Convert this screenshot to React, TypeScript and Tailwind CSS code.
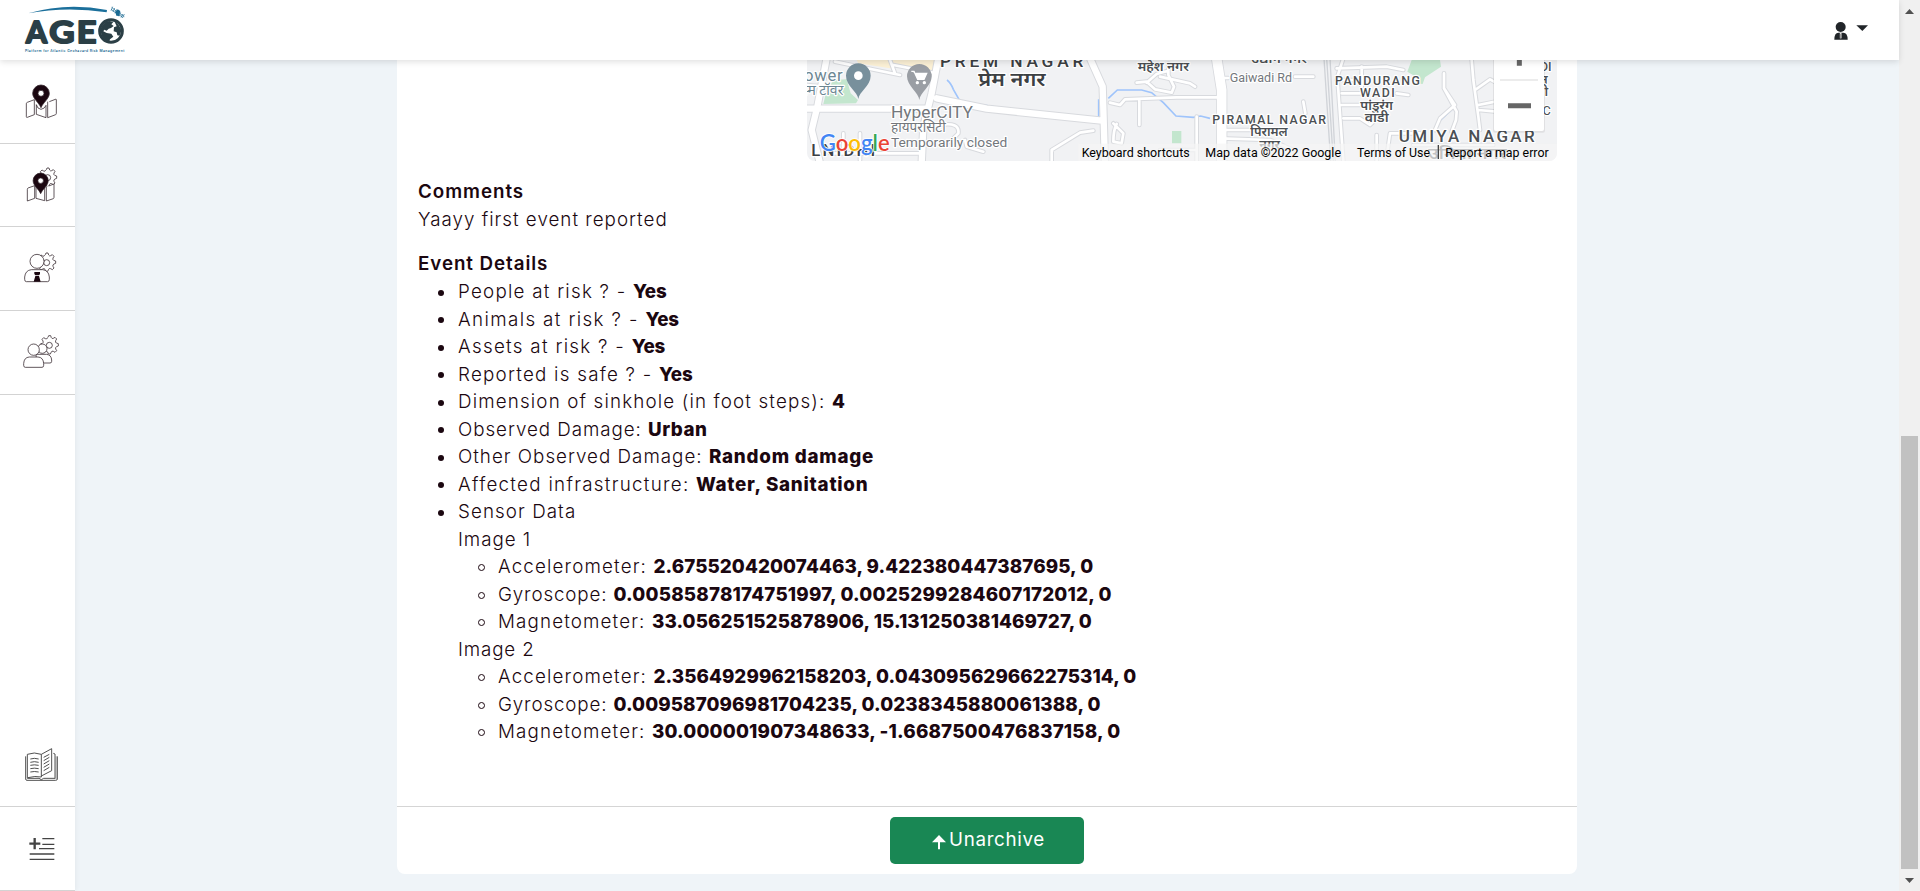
import type { ReactNode } from "react";

const GEAR =
  "M-4 -24 L-2 -29 L4 -29 L6 -23 Q8 -19 12 -21 L17 -24 L22 -19 L19 -14 Q17 -9 21 -7 L27 -5 L27 2 L22 4 Q17 6 19 11 L22 16 L17 21 L12 18 Q7 16 6 20 L3 26 L-3 26";

const GEAR_FULL = GEAR + " L-5 20 Q-7 16 -12 19 L-16 22 L-21 17 L-18 12 Q-16 7 -21 5 L-27 3 L-27 -4 L-21 -6 Q-17 -8 -19 -13 L-22 -18 L-17 -23 L-12 -20 Q-7 -18 -6 -22 Z";

function Logo() {
  return (
    <svg className="h-[60px] w-[130px]" viewBox="0 0 390 180">
      <path d="M84 40 Q200 6 321 30 L320 37 Q200 18 84 40Z" fill="#1b6f9b" />
      <g fill="#1b6a92">
        <path d="M346 36 l7 -8 l8 5 l-4 15 l-8 -1z" />
        <path d="M335 22l17 14M333 28l15 11M338 20l-5 12M344 24l-5 12M350 28l-5 12M356 38l17 12M357 44l12 9M362 37l-5 12M368 42l-5 11M373 42l-5 11" stroke="#1b6a92" strokeWidth="2" />
      </g>
      <g fill="#2b3f46" stroke="#2b3f46" strokeWidth="6" strokeLinejoin="round" fontFamily="Lato" fontWeight="700" fontSize="94">
        <text x="78" y="128" textLength="63" lengthAdjust="spacingAndGlyphs">A</text>
        <text x="148" y="128" textLength="76" lengthAdjust="spacingAndGlyphs">G</text>
        <text x="230" y="128" textLength="59" lengthAdjust="spacingAndGlyphs">E</text>
      </g>
      <circle cx="333" cy="93" r="34" fill="#fff" stroke="#2b3f46" strokeWidth="9" />
      <path d="M303 84 Q310 66 328 63 L340 66 L334 73 L341 78 L333 84 L326 86 L320 92 L313 89 L310 94 L320 99 L334 101 L340 110 L330 118 L327 126 Q306 118 303 98Z M343 64 Q360 74 364 92 L359 107 L352 106 L350 97 L341 94 L342 82 L350 79Z" fill="#2b3f46" />
      <text x="75" y="157" fontFamily="Inter" fontWeight="600" fontSize="10" fill="#1b6a92" textLength="298" lengthAdjust="spacing">Platform for Atlantic Geohazard Risk Management</text>
    </svg>
  );
}

function Pin({ x, y }: { x: number; y: number }) {
  return (
    <g transform={`translate(${x} ${y})`}>
      <path d="M0 43 C-6 28 -25 16 -25 0 A25 25 0 0 1 25 0 C25 16 6 28 0 43Z" fill="#1b0710" />
      <circle r="9" fill="#fff" />
    </g>
  );
}

function MapIcon() {
  return (
    <svg className="h-[83px] w-[75px]" viewBox="0 180 225 249" fill="none" stroke="#33262c" strokeWidth="2.3">
      <path d="M103 299L82 307Q79 308 79 311V350Q79 353 82 352L103 344ZM109 314V343L138 353V316M109 314Q112 327 123 328Q135 326 138 316M143 305V353L167 344Q169 343 169 340V300Q169 296 166 298L148 305" />
      <Pin x={123} y={280} />
    </svg>
  );
}

function MapGearIcon() {
  return (
    <svg className="h-[83px] w-[75px]" viewBox="0 44 225 249" fill="none" stroke="#33262c" strokeWidth="2.3">
      <g transform="translate(143 145)">
        <path d={GEAR_FULL} />
        <circle r="9" />
      </g>
      <path fill="#fff" d="M104 169L84 176Q82 177 82 180V215L104 207ZM108 169V207L134 214V172ZM139 172V215L160 208Q162 207 162 204V164L146 170" />
      <g transform="translate(122 154) scale(.91)">
        <Pin x={0} y={0} />
      </g>
    </svg>
  );
}

function UserGearIcon() {
  return (
    <svg className="h-[83px] w-[75px]" viewBox="0 294 225 249" fill="none" stroke="#33262c" strokeWidth="2.3">
      <g transform="translate(140 401)">
        <path d={GEAR_FULL} />
        <circle r="9" />
      </g>
      <circle cx="111" cy="397" r="21" fill="#fff" />
      <path fill="#fff" d="M79 458Q74 458 74 451V444Q76 424 94 422H128Q146 424 148 444V451Q148 458 143 458Z" />
      <path d="M103 429H120V435L117 439H106L103 435ZM106 441H117L122 458H101Z" fill="#1b0710" stroke="none" />
    </svg>
  );
}

function UsersGearIcon() {
  return (
    <svg className="h-[83px] w-[75px]" viewBox="0 544 225 249" fill="none" stroke="#33262c" strokeWidth="2.3">
      <g transform="translate(148 647)">
        <path d={GEAR_FULL} />
        <circle r="9" />
      </g>
      <circle cx="127" cy="657" r="14" fill="#fff" />
      <path fill="#fff" d="M108 674H140Q154 676 155 691V695Q155 700 150 700H110Z" />
      <circle cx="101" cy="660" r="17" fill="#fff" />
      <path fill="#fff" d="M76 713Q71 713 71 707V702Q72 683 88 682H114Q130 683 131 702V707Q131 713 126 713Z" />
    </svg>
  );
}

function BookIcon() {
  return (
    <svg className="h-[83px] w-[75px]" viewBox="0 8 225 249" fill="none" stroke="#444" strokeWidth="2.8">
      <path d="M77 108V176Q77 180 81 180H167Q172 180 172 176V108M82 102V174H117L124 178L131 174H165V101L160 99M82 102Q103 94 124 102V170Q105 166 84 172M124 102L155 85V151L124 167" />
      <path d="M91 116Q103 112 116 116M91 126Q103 122 116 126M91 135Q103 132 116 135M91 145Q103 142 116 145M91 155Q103 152 116 155M131 111L148 102M131 121L148 111M131 131L148 121M131 141L148 131M131 151L148 141" />
      <path d="M168 108V176" stroke="#888" />
    </svg>
  );
}

function AddListIcon() {
  return (
    <svg className="h-[83px] w-[75px]" viewBox="0 260 225 249" stroke="#444" strokeWidth="4">
      <path d="M127 355H163M127 372H163M117 385H163M89 401H163M89 417H163" />
      <path d="M88 370H121M104 353V387" strokeWidth="7" />
    </svg>
  );
}

function NavItem({ children, last }: { children: ReactNode; last?: boolean }) {
  return <a className={last ? "block h-[84px] border-b border-[#d3d3d3]" : "block h-[83.7px] border-b border-[#d3d3d3]"}>{children}</a>;
}

function StreetMap() {
  return (
    <svg className="h-[101px] w-[750px] rounded-b-lg" viewBox="81 30 2250 303">
      <rect x="81" y="30" width="2250" height="303" fill="#f1f2f4" />
      <path d="M160 90 L200 88 L212 130 L234 150 L228 160 L130 162 L140 120Z" fill="#c3e6ce" />
      <path d="M230 30H470L455 62L380 48L330 55L235 40Z" fill="#fcf1d6" />
      <path d="M1176 243h28v37h-28z" fill="#c3e6ce" />
      <path d="M1895 30H1980L1983 50L1935 82L1928 102L1905 100L1908 80L1882 65Z" fill="#c3e6ce" />
      <g fill="none" stroke="#9fc4fb" strokeWidth="5">
        <path d="M501 90Q512 98 520 118L537 148M560 158L640 170M956 148V200L944 204M985 145L1012 120H1085L1115 128L1150 158L1188 198L1240 202L1262 198L1290 205M1982 210L2016 178" />
      </g>
      <g fill="none" strokeLinejoin="round" strokeLinecap="round">
        <g stroke="#d8dade">
          <path d="M140 25L112 170L95 240L120 340M81 176H445M475 25L455 130L430 230L425 340M470 145L620 176L965 212M930 25L968 110L975 340" strokeWidth="25" />
          <path d="M165 35L360 75M330 30L345 70M340 45L470 70M81 105L130 110M190 250V310M240 250V330M150 310H425M480 225Q540 215 535 250L510 275M555 270L560 290L610 305M815 333V300L900 248L940 242M990 158L1020 165L1035 148L1190 142H1320M1078 150V225M1070 98L1100 95L1125 118L1175 128L1182 110L1165 75V40M1000 220L1030 250L1025 280L1000 275Q1000 240 1010 222M1100 98L1130 72L1165 62" strokeWidth="14" />
          <path d="M1310 25L1325 120V340" strokeWidth="34" />
          <path d="M1320 84H1345M1545 80H1600M1570 155L1576 190M1320 240H1430M1320 265L1470 270L1540 300M1690 25L1672 80L1690 333M1670 90H1745M1685 130H1745M1685 165H1745M1690 205H1740L1770 225L1785 210M1745 50V110M1670 55L1820 50L1870 60M1850 130L1885 135M1790 333V255M1820 320L1830 250H1920M1992 70V115L2030 185L2028 210L2015 245M1992 115L2025 165L1980 205L1965 240M2075 30L2080 90L2095 200L2100 240M2085 120L2130 88L2160 105M2095 165L2145 155M2095 180L2150 185M1900 285H2140M1250 200V333M1140 300H1250M1140 80L1230 100L1245 110" strokeWidth="14" />
        </g>
        <g stroke="#fff">
          <path d="M140 25L112 170L95 240L120 340M81 176H445M475 25L455 130L430 230L425 340M470 145L620 176L965 212M930 25L968 110L975 340" strokeWidth="19" />
          <path d="M165 35L360 75M330 30L345 70M340 45L470 70M81 105L130 110M190 250V310M240 250V330M150 310H425M480 225Q540 215 535 250L510 275M555 270L560 290L610 305M815 333V300L900 248L940 242M990 158L1020 165L1035 148L1190 142H1320M1078 150V225M1070 98L1100 95L1125 118L1175 128L1182 110L1165 75V40M1000 220L1030 250L1025 280L1000 275Q1000 240 1010 222M1100 98L1130 72L1165 62" strokeWidth="8" />
          <path d="M1310 25L1325 120V340" strokeWidth="29" />
          <path d="M1320 84H1345M1545 80H1600M1570 155L1576 190M1320 240H1430M1320 265L1470 270L1540 300M1690 25L1672 80L1690 333M1670 90H1745M1685 130H1745M1685 165H1745M1690 205H1740L1770 225L1785 210M1745 50V110M1670 55L1820 50L1870 60M1850 130L1885 135M1790 333V255M1820 320L1830 250H1920M1992 70V115L2030 185L2028 210L2015 245M1992 115L2025 165L1980 205L1965 240M2075 30L2080 90L2095 200L2100 240M2085 120L2130 88L2160 105M2095 165L2145 155M2095 180L2150 185M1900 285H2140M1250 200V333M1140 300H1250M1140 80L1230 100L1245 110" strokeWidth="8" />
        </g>
        <path d="M1632 25L1652 333M1640 25L1660 333M1650 25L1666 333" stroke="#d0d3d8" strokeWidth="4" />
      </g>
      <g fontFamily="Roboto, 'Noto Sans', sans-serif" stroke="#fff" strokeWidth="7" strokeLinejoin="round" className="[paint-order:stroke]">
        <g fill="#6d8793">
          <text x="72" y="93" fontSize="50" textLength="116">ower</text>
          <text x="66" y="135" fontSize="42" textLength="124" lengthAdjust="spacingAndGlyphs">स्म टॉवर</text>
        </g>
        <g fill="#73777c">
          <text x="333" y="204" fontSize="51" textLength="246" lengthAdjust="spacingAndGlyphs">HyperCITY</text>
          <text x="333" y="247" fontSize="43" textLength="164" lengthAdjust="spacingAndGlyphs">हायपरसिटी</text>
          <text x="333" y="290" fontSize="41" textLength="349" lengthAdjust="spacingAndGlyphs">Temporarily closed</text>
          <text x="1349" y="96" fontSize="36" textLength="187" lengthAdjust="spacingAndGlyphs">Gaiwadi Rd</text>
        </g>
        <g fill="#3c4043" fontWeight="500">
          <text x="480" y="50" fontSize="52" textLength="430">PREM NAGAR</text>
          <text x="595" y="108" fontSize="58" fontFamily="Noto Sans" fontWeight="600" textLength="202" lengthAdjust="spacingAndGlyphs">प्रेम नगर</text>
          <text x="94" y="318" fontSize="50" textLength="192">LNIDHI</text>
        </g>
        <g fill="#4b4f53" fontWeight="500" fontSize="37">
          <text x="1073" y="62" fontFamily="Noto Sans" fontWeight="600" fontSize="40" textLength="154" lengthAdjust="spacingAndGlyphs">महेश नगर</text>
          <text x="1413" y="40" fontFamily="Noto Sans" fontWeight="600" fontSize="40" textLength="168" lengthAdjust="spacingAndGlyphs">उद्योग नगर</text>
          <text x="1297" y="222" textLength="341">PIRAMAL NAGAR</text>
          <text x="1411" y="259" fontFamily="Noto Sans" fontWeight="600" fontSize="39" textLength="112" lengthAdjust="spacingAndGlyphs">पिरामल</text>
          <text x="1438" y="297" fontFamily="Noto Sans" fontWeight="600" fontSize="39" textLength="62" lengthAdjust="spacingAndGlyphs">नगर</text>
          <text x="1665" y="105" textLength="255">PANDURANG</text>
          <text x="1740" y="141" textLength="104">WADI</text>
          <text x="1741" y="179" fontFamily="Noto Sans" fontWeight="600" fontSize="39" textLength="98" lengthAdjust="spacingAndGlyphs">पांडुरंग</text>
          <text x="1754" y="216" fontFamily="Noto Sans" fontWeight="600" fontSize="39" textLength="72" lengthAdjust="spacingAndGlyphs">वाडी</text>
          <text x="2280" y="64">DI</text>
          <text x="2280" y="102" fontFamily="Noto Sans" fontWeight="600" fontSize="39">न</text>
          <text x="2270" y="139" fontFamily="Noto Sans" fontWeight="600" fontSize="39">ी</text>
          <text x="2288" y="194" fontWeight="400">C</text>
          <text x="1856" y="277" fontSize="51" textLength="408">UMIYA NAGAR</text>
          <text x="1945" y="327" fontFamily="Noto Sans" fontWeight="600" fontSize="50" textLength="235" lengthAdjust="spacingAndGlyphs">उमिया नगर</text>
        </g>
      </g>
      <path d="M235 147C233 125 198 108 198 77A37 37 0 0 1 272 77C272 108 237 125 235 147Z" fill="#78909c" />
      <circle cx="235" cy="77" r="13" fill="#fff" />
      <path d="M418 150C416 128 381 108 381 79A37 37 0 0 1 455 79C455 108 420 128 418 150Z" fill="#9a9ea4" />
      <path d="M394 64H402L413 88H432L440 70H407" fill="#fff" stroke="#fff" strokeWidth="4" />
      <circle cx="412" cy="98" r="5" fill="#fff" />
      <circle cx="433" cy="98" r="5" fill="#fff" />
      <text x="119" y="302" fontFamily="Lato" fontWeight="600" fontSize="70" textLength="210" lengthAdjust="spacingAndGlyphs" stroke="#fff" strokeWidth="5" className="[paint-order:stroke]">
        <tspan fill="#4285f4">G</tspan><tspan fill="#ea4335">o</tspan><tspan fill="#fbbc04">o</tspan><tspan fill="#4285f4">g</tspan><tspan fill="#34a853">l</tspan><tspan fill="#ea4335">e</tspan>
      </text>
      <rect x="895" y="281" width="1436" height="52" fill="#f5f5f5" fillOpacity=".7" />
      <g fontFamily="Roboto" fontSize="38" fill="#000">
        <text x="905" y="320" textLength="324" lengthAdjust="spacingAndGlyphs">Keyboard shortcuts</text>
        <text x="1276" y="320" textLength="407" lengthAdjust="spacingAndGlyphs">Map data ©2022 Google</text>
        <text x="1731" y="320" textLength="219" lengthAdjust="spacingAndGlyphs">Terms of Use</text>
        <text x="1996" y="320" textLength="310" lengthAdjust="spacingAndGlyphs">Report a map error</text>
      </g>
      <path d="M1975 285V327" stroke="#444" strokeWidth="4" />
      <g>
        <rect x="2139" y="20" width="156" height="228" rx="6" fill="#000" fillOpacity=".07" />
        <rect x="2142" y="20" width="150" height="223" rx="6" fill="#fff" />
        <path d="M2160 90H2274" stroke="#e6e6e6" strokeWidth="5" />
        <path d="M2184 167H2253M2218 20V47" stroke="#666" strokeWidth="15" />
      </g>
    </svg>
  );
}

function Row({ label, value, sub, ls, vs = "tracking-[-0.1px]" }: { label: string; value?: string; sub?: boolean; ls: string; vs?: string }) {
  return (
    <li className="flex h-[27.5px] whitespace-pre">
      <span className="flex w-10 shrink-0 items-center pt-[2px] pl-5">
        <i className={sub ? "size-[7px] rounded-full border border-[#1b0710]" : "size-[6px] rounded-full bg-[#1b0710]"} />
      </span>
      <span className={ls}>{label + (value ? " " : "")}</span>
      {value && <span className={"font-extrabold " + vs}>{value}</span>}
    </li>
  );
}

export default function App() {
  return (
    <div className="flex h-[891px] w-full overflow-hidden bg-[#eff4f8] font-['Inter',sans-serif]">
      <div className="flex min-w-0 flex-1 flex-col">
        <header className="relative z-10 flex h-[60px] shrink-0 items-center justify-between bg-white pr-[31px] shadow-[0_2px_6px_rgba(0,0,0,0.12)]">
          <Logo />
          <svg className="mt-px h-[20px] w-[34px]" viewBox="162 62 102 60" fill="#212529">
            <circle cx="182" cy="80" r="15" />
            <path d="M163 118Q163 97 175 97H190Q203 97 203 118Z" />
            <path d="M182 98V114" stroke="#fff" strokeWidth="5" />
            <path d="M182 100V113" stroke="#555" strokeWidth="2" />
            <path d="M229 75H264L247 92Z" />
          </svg>
        </header>

        <div className="flex min-h-0 flex-1">
          <nav className="flex w-[75px] shrink-0 flex-col justify-between bg-white shadow-[1px_0_5px_rgba(0,0,0,0.05)]">
            <div>
              <NavItem><MapIcon /></NavItem>
              <NavItem><MapGearIcon /></NavItem>
              <NavItem><UserGearIcon /></NavItem>
              <NavItem><UsersGearIcon /></NavItem>
            </div>
            <div>
              <NavItem last><BookIcon /></NavItem>
              <NavItem last><AddListIcon /></NavItem>
            </div>
          </nav>

          <main className="flex flex-1 justify-center">
            <section className="flex h-[814px] w-[1180px] flex-col rounded-b-lg bg-white text-[18.8px] leading-[27.5px] text-[#1b0710]">
              <div className="flex justify-end pr-5">
                <StreetMap />
              </div>
              <div className="flex-1 px-[21px] pt-[17px] font-light">
                <h2 className="font-semibold tracking-[0.95px]">Comments</h2>
                <p className="tracking-[1px]">Yaayy first event reported</p>
                <h2 className="mt-[16.5px] font-semibold tracking-[0.92px]">Event Details</h2>
                <ul className="mt-px">
                  <Row label="People at risk ? -" value="Yes" ls="tracking-[1.24px]" />
                  <Row label="Animals at risk ? -" value="Yes" ls="tracking-[1.37px]" />
                  <Row label="Assets at risk ? -" value="Yes" ls="tracking-[1.29px]" />
                  <Row label="Reported is safe ? -" value="Yes" ls="tracking-[1.24px]" />
                  <Row label="Dimension of sinkhole (in foot steps):" value="4" ls="tracking-[1.15px]" />
                  <Row label="Observed Damage:" value="Urban" ls="tracking-[0.94px]" vs="tracking-[0.5px]" />
                  <Row label="Other Observed Damage:" value="Random damage" ls="tracking-[1px]" vs="tracking-[0.77px]" />
                  <Row label="Affected infrastructure:" value="Water, Sanitation" ls="tracking-[1.28px]" vs="tracking-[0.74px]" />
                  <Row label="Sensor Data" ls="tracking-[1.07px]" />
                </ul>
                <div className="pl-10">
                  <p className="tracking-[0.95px]">Image 1</p>
                  <ul>
                    <Row sub label="Accelerometer:" value="2.675520420074463, 9.422380447387695, 0" ls="tracking-[1.15px]" vs="tracking-[0.09px]" />
                    <Row sub label="Gyroscope:" value="0.00585878174751997, 0.0025299284607172012, 0" ls="tracking-[0.85px]" vs="tracking-[0.2px]" />
                    <Row sub label="Magnetometer:" value="33.056251525878906, 15.131250381469727, 0" ls="tracking-[1.14px]" vs="tracking-[0.09px]" />
                  </ul>
                  <p className="tracking-[0.85px]">Image 2</p>
                  <ul>
                    <Row sub label="Accelerometer:" value="2.3564929962158203, 0.043095629662275314, 0" ls="tracking-[1.15px]" vs="tracking-[0.05px]" />
                    <Row sub label="Gyroscope:" value="0.009587096981704235, 0.0238345880061388, 0" ls="tracking-[0.85px]" vs="tracking-[0.09px]" />
                    <Row sub label="Magnetometer:" value="30.000001907348633, -1.6687500476837158, 0" ls="tracking-[1.14px]" vs="tracking-[0.17px]" />
                  </ul>
                </div>
              </div>
              <footer className="flex h-[68px] items-start justify-center border-t border-[#d5d5d5] pt-[10px]">
                <button className="flex h-[47px] w-[194px] items-center justify-center rounded-[5px] bg-[#198754] pb-px pl-[3px] font-normal tracking-[0.68px] text-white">
                  <svg className="mt-[5px] mr-[3px] h-[15px] w-[14px]" viewBox="217 131 42 45" fill="#fff">
                    <path d="M238 131L259 153H241V174H235V153H217Z" />
                  </svg>
                  Unarchive
                </button>
              </footer>
            </section>
          </main>
        </div>
      </div>

      <aside className="flex w-[21px] shrink-0 flex-col items-center bg-[#f0f0f0] pt-[9px] pb-2">
        <svg className="h-[5px] w-[9px]" viewBox="0 0 9 5" fill="#505050"><path d="M4.5 0L9 5H0Z" /></svg>
        <div className="mt-[422px] h-[433px] w-[17px] bg-[#c1c1c1]" />
        <svg className="mt-[9px] h-[5px] w-[9px]" viewBox="0 0 9 5" fill="#505050"><path d="M0 0H9L4.5 5Z" /></svg>
      </aside>
    </div>
  );
}
